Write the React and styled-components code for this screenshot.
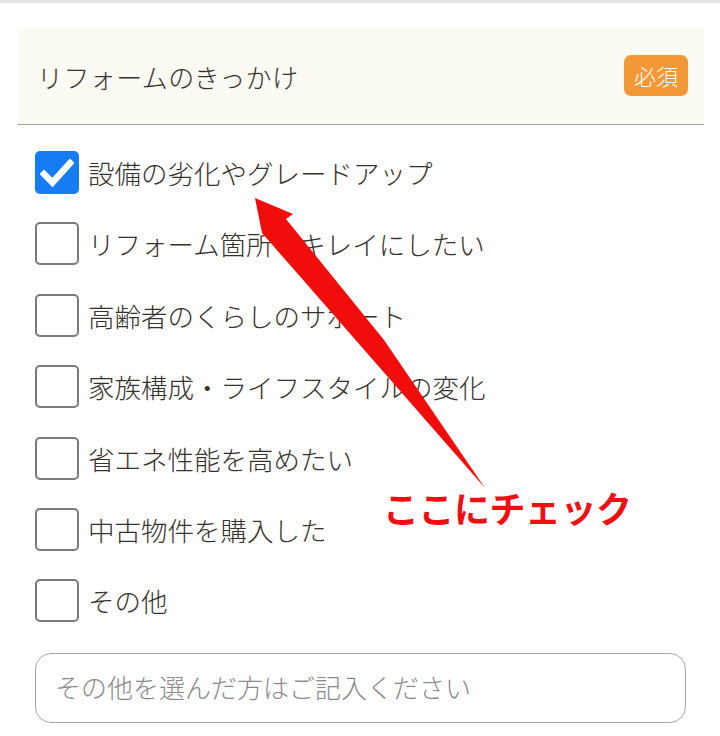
import React, { useState } from "react";
import styled, { createGlobalStyle } from "styled-components";

const GlobalStyle = createGlobalStyle`
  body {
    margin: 0;
    background: #ffffff;
    font-family: "Noto Sans CJK JP", "Noto Sans", sans-serif;
  }
`;

const reasons = [
  "設備の劣化やグレードアップ",
  "リフォーム箇所をキレイにしたい",
  "高齢者のくらしのサポート",
  "家族構成・ライフスタイルの変化",
  "省エネ性能を高めたい",
  "中古物件を購入した",
  "その他",
];

function App() {
  const [checked, setChecked] = useState([0]);

  const toggle = (index) => {
    setChecked((prev) =>
      prev.includes(index) ? prev.filter((i) => i !== index) : [...prev, index]
    );
  };

  return (
    <>
      <GlobalStyle />
      <Page>
        <TopBar />
        <Form>
          <Header>
            <Title>リフォームのきっかけ</Title>
            <Badge>必須</Badge>
          </Header>
          <List>
            {reasons.map((reason, index) => (
              <Row key={index} onClick={() => toggle(index)}>
                <Box checked={checked.includes(index)}>
                  {checked.includes(index) && (
                    <svg width="34" height="30" viewBox="0 0 34 30">
                      <path
                        d="M4 16 L12.5 24.5 L30 5"
                        fill="none"
                        stroke="#ffffff"
                        strokeWidth="6.5"
                        strokeLinecap="square"
                        strokeLinejoin="miter"
                      />
                    </svg>
                  )}
                </Box>
                <Label>{reason}</Label>
              </Row>
            ))}
          </List>
          <OtherInput placeholder="その他を選んだ方はご記入ください" />
        </Form>

        {/* annotation overlay */}
        <Arrow width="720" height="736" viewBox="0 0 720 736">
          <polygon
            points="255,198 293,214 286,219 384,340 485,488 262,233"
            fill="#f20d0d"
          />
        </Arrow>
        <Note>ここにチェック</Note>
      </Page>
    </>
  );
}

export default App;

const Page = styled.div`
  position: relative;
  width: 720px;
  height: 736px;
  overflow: hidden;
  background: #ffffff;
`;

const TopBar = styled.div`
  height: 3px;
  background: #e4e4e4;
`;

const Form = styled.div`
  padding: 25px 16px 0 18px;
`;

const Header = styled.div`
  height: 96px;
  display: flex;
  align-items: center;
  justify-content: space-between;
  padding: 0 16px 0 19px;
  background: #fcfbf3;
  border-bottom: 1px solid #a3a09a;
`;

const Title = styled.span`
  font-size: 26px;
  font-weight: 300;
  color: #36322e;
  letter-spacing: 0.4px;
`;

const Badge = styled.span`
  display: flex;
  align-items: center;
  justify-content: center;
  width: 64px;
  height: 41px;
  border-radius: 7px;
  background: #f29836;
  color: #ffffff;
  font-size: 22px;
  font-weight: 300;
  margin-top: -2px;
`;

const List = styled.div`
  display: flex;
  flex-direction: column;
  padding: 26px 0 0 17px;
`;

const Row = styled.div`
  display: flex;
  align-items: center;
  height: 43px;
  margin-bottom: 28.4px;
  cursor: pointer;
`;

const Box = styled.span`
  box-sizing: border-box;
  width: 44px;
  height: 43px;
  flex-shrink: 0;
  display: flex;
  align-items: center;
  justify-content: center;
  border-radius: 5px;
  background: ${(props) => (props.checked ? "#167cf4" : "#ffffff")};
  border: ${(props) => (props.checked ? "none" : "2px solid #7a7a7a")};
`;

const Label = styled.span`
  margin-left: 9px;
  font-size: 26.5px;
  font-weight: 300;
  color: #36322e;
  white-space: nowrap;
`;

const OtherInput = styled.input`
  box-sizing: border-box;
  display: block;
  margin: 2px 0 0 17px;
  width: 651px;
  height: 70px;
  padding: 0 19px 2px;
  border: 1px solid #a8a8a8;
  border-radius: 16px;
  font-family: "Noto Sans CJK JP", "Noto Sans", sans-serif;
  font-size: 26px;
  font-weight: 300;
  color: #36322e;
  outline: none;

  &::placeholder {
    color: #8a8a8a;
  }
`;

const Arrow = styled.svg`
  position: absolute;
  top: 0;
  left: 0;
  pointer-events: none;
`;

const Note = styled.span`
  position: absolute;
  left: 383px;
  top: 481px;
  font-size: 36px;
  font-weight: 700;
  color: #ee0f14;
  white-space: nowrap;
  letter-spacing: -0.5px;
`;
